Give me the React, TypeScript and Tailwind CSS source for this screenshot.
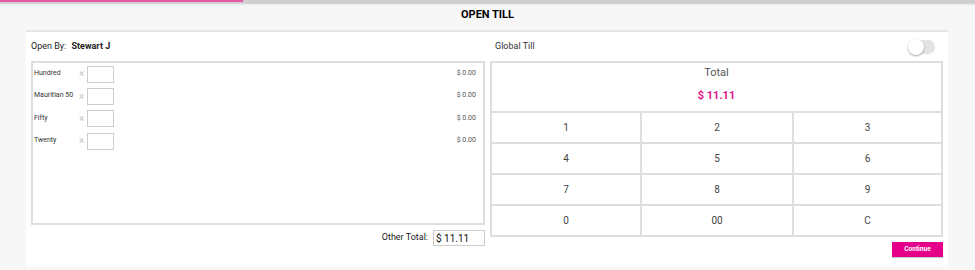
import React from "react";

const notes = ["Hundred", "Mauritian 50", "Fifty", "Twenty"];
const keys = ["1", "2", "3", "4", "5", "6", "7", "8", "9", "0", "00", "C"];

export default function App() {
  return (
    <div className="w-full h-[270px] bg-[#f7f7f7] font-['Roboto',sans-serif] text-[#333] overflow-hidden">
      {/* progress bar */}
      <div className="h-[3px] bg-[#cfcfcf] shadow-[0_1px_2px_rgba(0,0,0,0.2)]">
        <div className="w-[243px] h-[2px] bg-[#e45aa4]" />
      </div>

      <div className="h-[27px] flex justify-center pt-[5px]">
        <h1 className="text-[11px] font-bold text-black leading-[14px]">OPEN TILL</h1>
      </div>

      <div className="ml-[26px] w-[922px] h-[237px] bg-white border-t-2 border-[#e4e4e4] px-[5px]">
        <div className="flex h-[29px] items-center">
          <div className="w-[459px] text-[9px] text-[#222]">
            Open By: <span className="ml-[3px] font-bold">Stewart J</span>
          </div>
          <div className="flex-1 flex items-center justify-between pl-[5px]">
            <span className="text-[9px] text-[#333]">Global Till</span>
            <div className="relative w-[27px] h-[16px] mr-[8px]">
              <div className="absolute inset-x-0 top-[1px] h-[14px] rounded-full bg-[#e3e3e3]" />
              <div className="absolute left-0 top-0 w-[16px] h-[16px] rounded-full bg-white shadow-[0_1px_2px_rgba(0,0,0,0.35)]" />
            </div>
          </div>
        </div>

        <div className="flex gap-[5px]">
          <div className="w-[454px]">
            <div className="h-[164px] border-2 border-[#dedede] pl-[1px] pr-[7px]">
              {notes.map((n) => (
                <div key={n} className="flex items-center h-[22.4px]">
                  <span className="w-[45px] text-[7px] text-[#333] -translate-y-[1px]">{n}</span>
                  <span className="w-[8px] text-[10px] text-[#c4c4c4] leading-none">×</span>
                  <div className="w-[27px] h-[17px] border border-[#ccc] bg-white" />
                  <span className="ml-auto text-[7px] text-[#555] -translate-y-[1px]">$ 0.00</span>
                </div>
              ))}
            </div>
            <div className="flex justify-end items-center mt-[5px] gap-[5px]">
              <span className="text-[9px] text-[#222]">Other Total:</span>
              <div className="w-[52px] h-[16px] border border-[#ccc] flex items-center px-[2px] text-[10px] text-[#111]">
                $ 11.11
              </div>
            </div>
          </div>

          <div className="w-[453px]">
            <div className="border-2 border-[#dedede]">
              <div className="h-[48px] flex flex-col items-center pt-[3px]">
                <span className="text-[11px] text-[#555] leading-[14px]">Total</span>
                <span className="mt-[9px] text-[11px] font-bold text-[#e5168a] leading-[14px]">$ 11.11</span>
              </div>
              <div className="grid grid-cols-[150px_152px_1fr]">
                {keys.map((k, i) => (
                  <div
                    key={k}
                    className={`h-[31px] flex items-center justify-center text-[10px] text-[#444] border-t-2 border-[#dedede] ${i % 3 !== 2 ? "border-r-2" : ""}`}
                  >
                    {k}
                  </div>
                ))}
              </div>
            </div>
            <div className="flex justify-end mt-[5px]">
              <button className="w-[51px] h-[15px] bg-[#e5008a] text-white text-[6.5px] font-bold shadow-[0_1px_1px_rgba(0,0,0,0.2)]">
                Continue
              </button>
            </div>
          </div>
        </div>
      </div>
    </div>
  );
}
